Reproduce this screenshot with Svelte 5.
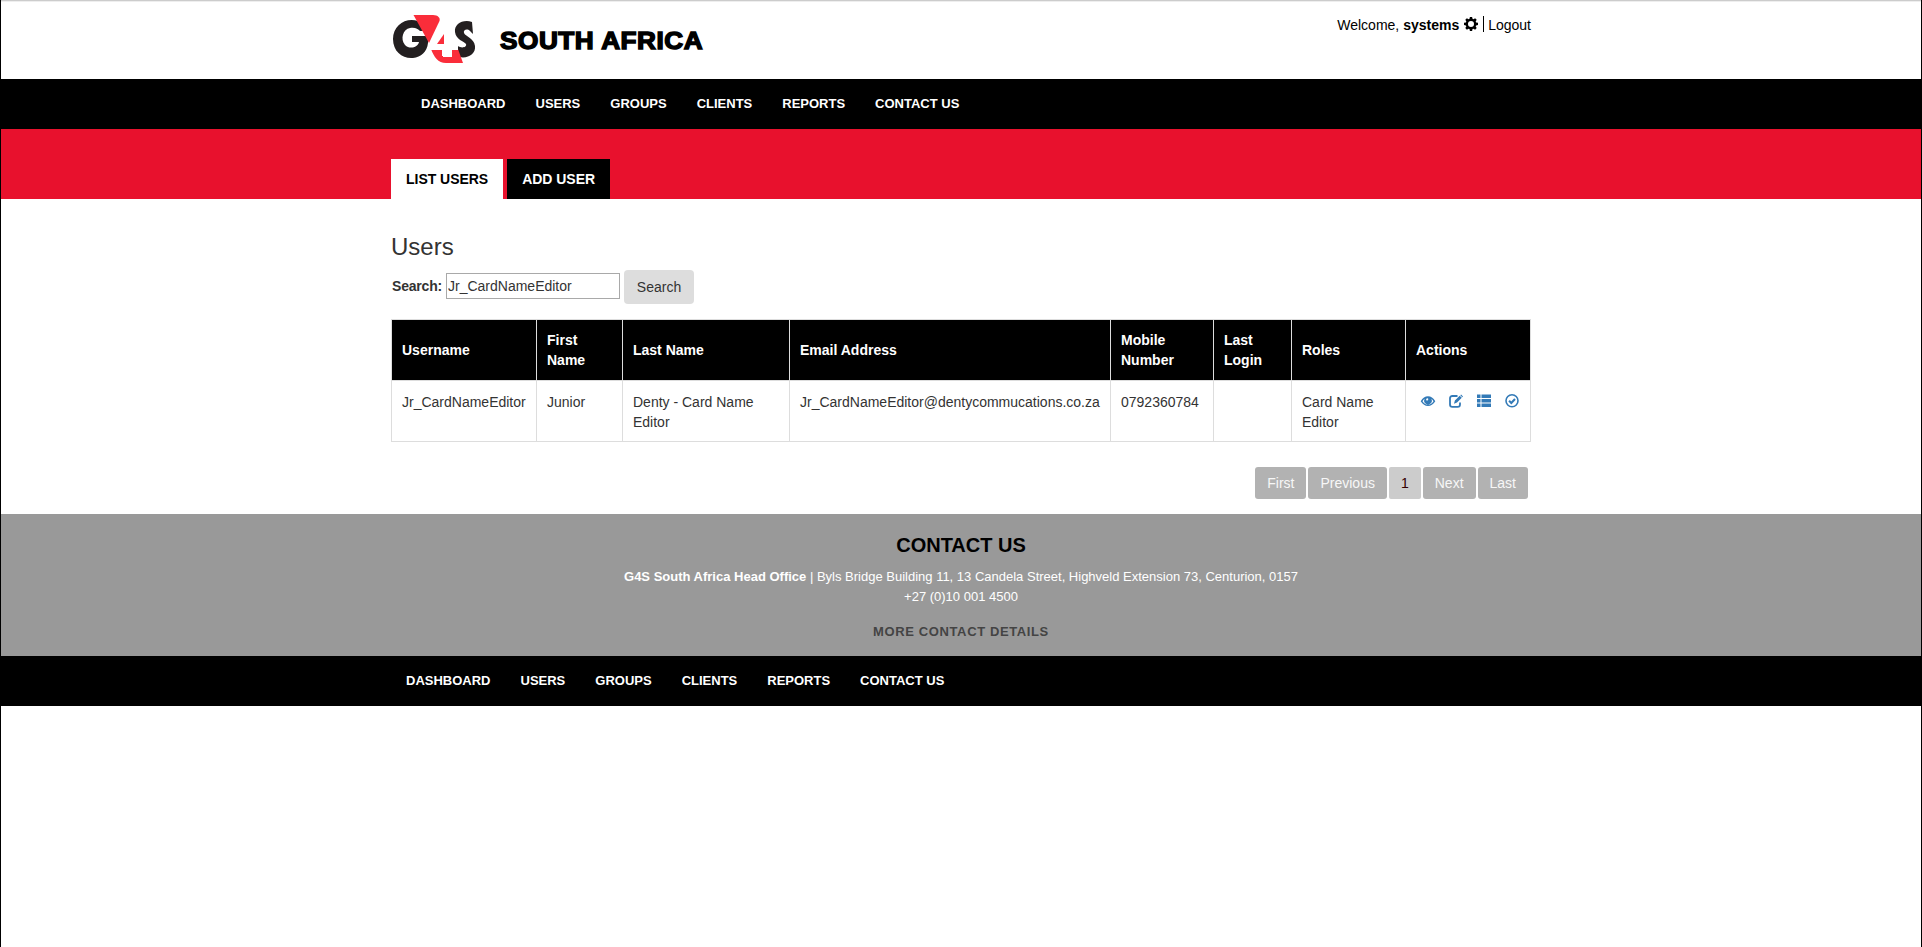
<script>
  const links = ['DASHBOARD', 'USERS', 'GROUPS', 'CLIENTS', 'REPORTS', 'CONTACT US'];
  const columns = [
    ['Username', 145], ['First Name', 86], ['Last Name', 167], ['Email Address', 321],
    ['Mobile Number', 103], ['Last Login', 78], ['Roles', 114], ['Actions', 125]
  ];
  const row = ['Jr_CardNameEditor', 'Junior', 'Denty - Card Name Editor',
    'Jr_CardNameEditor@dentycommucations.co.za', '0792360784', '', 'Card Name Editor'];
  let search = $state('Jr_CardNameEditor');
</script>

<div class="page">
  <header class="wrap head">
    <div class="brand">
      <svg class="logo" width="84" height="50" viewBox="0 0 84 50" role="img" aria-label="G4S">
        <path fill="#231f20" d="M26 7C14 3 1 11 1 25c0 13 10 20 20 19 8-1 14-6 15-15V22H20v6h7c-1 5-9 8-14 3-5-6-2-16 5-17 5-1 8 1 10 3h10z" />
        <path fill="#fff" d="M24 0 40 30 50 44V0z" />
        <path fill="#fa2d3a" d="M21.5 1H41c5 0 7.500 3 6.500 6L37 29z" />
        <path fill="#231f20" d="M80 8c-9-3-18 2-17 10 1 8 9 9 11 12 1 3-3 4-6 3l-7-3 3 12c10 4 20-1 19-10-1-8-9-9-11-13-1-3 3-5 6-2l3 3z" />
        <path fill="#fff" d="M54 10h8v26h-8z" />
        <path fill="#fa2d3a" d="M39 35h11v7h8v-7h8l5 14H54c-8 0-12-6-15-14z" />
        <path fill="#fff" fill-rule="evenodd" d="M53 9h8v21h5v6h-6v7h-9v-7H36v-3zm-1 11-7 10h7z" />
        <path fill="#fa2d3a" d="m52 20-7 10h7z" />
      </svg>
      <span class="country">SOUTH AFRICA</span>
    </div>
    <div class="account">
      Welcome, <b>systems</b>
      <svg class="gear" width="14" height="14" viewBox="0 0 14 14"><path fill="#000" fill-rule="evenodd" d="M5.900 0h2.200l.4 1.800 1 .4 1.600-1 1.600 1.600-1 1.600.4 1 1.900.4V8l-1.900.5-.4 1 1 1.600-1.600 1.600-1.600-1-1 .4L8.100 14H5.900l-.4-1.900-1-.4-1.600 1-1.600-1.600 1-1.600-.4-1L0 8V5.800l1.900-.4.4-1-1-1.600 1.600-1.600 1.600 1 1-.4zM7 4a3 3 0 1 0 0 6 3 3 0 0 0 0-6z" /></svg>
      <span class="logout">Logout</span>
    </div>
  </header>

  <nav class="bar main"><div class="wrap links">{#each links as l}<a href="#{l}">{l}</a>{/each}</div></nav>

  <div class="red">
    <div class="wrap tabs"><span class="tab active">LIST USERS</span><span class="tab">ADD USER</span></div>
  </div>

  <main class="wrap">
    <h1>Users</h1>
    <div class="search">
      <label for="q">Search:</label>
      <input id="q" bind:value={search} />
      <button>Search</button>
    </div>
    <table>
      <colgroup>{#each columns as c}<col style="width:{c[1]}px" />{/each}</colgroup>
      <thead><tr>{#each columns as c}<th>{c[0]}</th>{/each}</tr></thead>
      <tbody>
        <tr>
          {#each row as cell}<td>{cell}</td>{/each}
          <td>
            <div class="actions">
              <svg viewBox="0 0 14 14"><path fill="#337ab7" fill-rule="evenodd" d="M-.3 7.200C1.600 4 4.200 2.200 7 2.200S12.400 4 14.300 7.200C12.400 10.400 9.800 12 7 12S1.600 10.400-.3 7.200zm1.800 0C2.900 9.500 4.700 10.700 7 10.700s4.100-1.200 5.500-3.500c-.7-1.200-1.400-1.900-2.300-2.500a3.800 3.800 0 1 1-6.400 0c-.9.600-1.600 1.300-2.300 2.500zM6 4 4.900 5.900l1.400.8 1.200-1.800z" /></svg>
              <svg viewBox="0 0 14 14"><path fill="none" stroke="#337ab7" stroke-width="1.800" d="M8.500 2H3.400Q1 2 1 4.300v6.200Q1 12.900 3.400 12.900h5.200q2.400 0 2.400-2.400V8.600" /><path fill="#337ab7" d="m5 9.700.9-3.200 4.800-4.800 2.100 2.100-4.800 4.800zM11.300 1.200l.8-.8 1.900 2-.7.800z" /></svg>
              <svg viewBox="0 0 14 14"><path fill="#337ab7" d="M0 .5h3.500v3.500H0zm4.500 0H14v3.500H4.500zM0 5h3.500v3.500H0zm4.500 0H14v3.500H4.500zM0 9.500h3.500V13H0zm4.500 0H14V13H4.500z" /></svg>
              <svg viewBox="0 0 14 14"><circle cx="7" cy="6.800" r="6" fill="none" stroke="#337ab7" stroke-width="1.600" /><path fill="none" stroke="#337ab7" stroke-width="2.100" d="m4.100 6.800 2.200 2.100L10 5" /></svg>
            </div>
          </td>
        </tr>
      </tbody>
    </table>
    <div class="pager">
      <span>First</span><span>Previous</span><span class="current">1</span><span>Next</span><span>Last</span>
    </div>
  </main>

  <section class="contact">
    <h2>CONTACT US</h2>
    <p><b>G4S South Africa Head Office</b> | Byls Bridge Building 11, 13 Candela Street, Highveld Extension 73, Centurion, 0157<br />+27 (0)10 001 4500</p>
    <a class="more" href="#contact">MORE CONTACT DETAILS</a>
  </section>
  <nav class="bar"><div class="wrap links">{#each links as l}<a href="#{l}">{l}</a>{/each}</div></nav>
</div>

<style>
  .page, .page * { box-sizing: border-box; }
  .page {
    height: 947px; overflow: hidden; color: #333;
    background: linear-gradient(#ccc 0 1px, #eee 1px 2px, #fff 2px);
    border-left: 1px solid #000; border-right: 1px solid #000;
    font: 14px/20px "Liberation Sans", Arial, sans-serif;
  }
  .wrap { width: 1140px; margin: 0 auto; }
  .head { display: flex; justify-content: space-between; height: 79px; padding-top: 14px; }
  .brand { display: flex; padding-left: 1px; }
  .logo { display: block; }
  .country {
    margin: 15px 0 0 24px; font-size: 24px; line-height: 24px; font-weight: bold; color: #000;
    -webkit-text-stroke: 1.4px #000; letter-spacing: .5px; white-space: nowrap;
    transform: scaleX(1.09); transform-origin: left;
  }
  .account { padding-top: 1px; color: #000; display: flex; white-space: pre; height: 20px; }
  .gear { margin: 2px 5px 0 5px; }
  .logout { border-left: 1px solid #000; padding-left: 4px; height: 16px; line-height: 18px; margin-top: 1px; }
  .bar { background: #000; height: 50px; }
  .links { display: flex; gap: 30px; padding-left: 15px; }
  .main .links { padding-left: 30px; }
  .links a { color: #fff; font-weight: bold; font-size: 13px; line-height: 50px; text-decoration: none; }
  .red { background: #e8112d; height: 70px; padding-top: 30px; }
  .tabs { display: flex; gap: 4px; }
  .tab { height: 40px; padding: 0 15px; line-height: 40px; font-weight: bold; color: #fff; background: #000; letter-spacing: -.03px; }
  .tab.active { color: #000; background: #fff; }
  main { display: flex; flex-direction: column; height: 315px; padding: 34px 0 15px; }
  h1 { margin: 0 0 10px; font-size: 24px; line-height: 27px; font-weight: normal; }
  .search { display: flex; height: 33px; align-items: flex-start; }
  .search label { font-weight: bold; margin: 6px 0 0 1px; width: 54px; letter-spacing: -.2px; }
  .search input {
    width: 174px; height: 26px; margin-top: 3px; padding: 1px; border: 1px solid #a9a9a9;
    font: inherit; color: #333; background: #fff;
  }
  .search button { margin-left: 4px; width: 70px; height: 34px; border: 0; border-radius: 4px; background: #ddd; color: #333; font: inherit; padding: 0; }
  table { width: 1140px; margin-top: 16px; border-collapse: collapse; table-layout: fixed; }
  th, td { border: 1px solid #ddd; padding: 10px; height: 61px; text-align: left; }
  th { background: #000; color: #fff; vertical-align: middle; }
  td { vertical-align: top; padding-top: 11px; padding-bottom: 9px; }
  .actions { display: flex; gap: 14px; padding: 2px 0 0 5px; }
  .actions svg { width: 14px; height: 14px; flex: none; overflow: visible; }
  .pager { display: flex; justify-content: flex-end; gap: 2px; margin: auto 3px 0 0; }
  .pager span { height: 32px; line-height: 32px; padding: 0 12px; border-radius: 3px; background: #b2b2b2; color: #f7f7f7; }
  .pager .current { background: #ccc; color: #300; border-radius: 2px; }
  .contact { height: 142px; background: #999; text-align: center; color: #fff; padding-top: 20px; }
  h2 { margin: 0 0 11px; font-size: 20px; line-height: 22px; color: #000; }
  .contact p { margin: 0 0 14px; font-size: 13px; }
  .more { color: #444; font-weight: bold; text-decoration: none; font-size: 13px; letter-spacing: .62px; }
</style>
